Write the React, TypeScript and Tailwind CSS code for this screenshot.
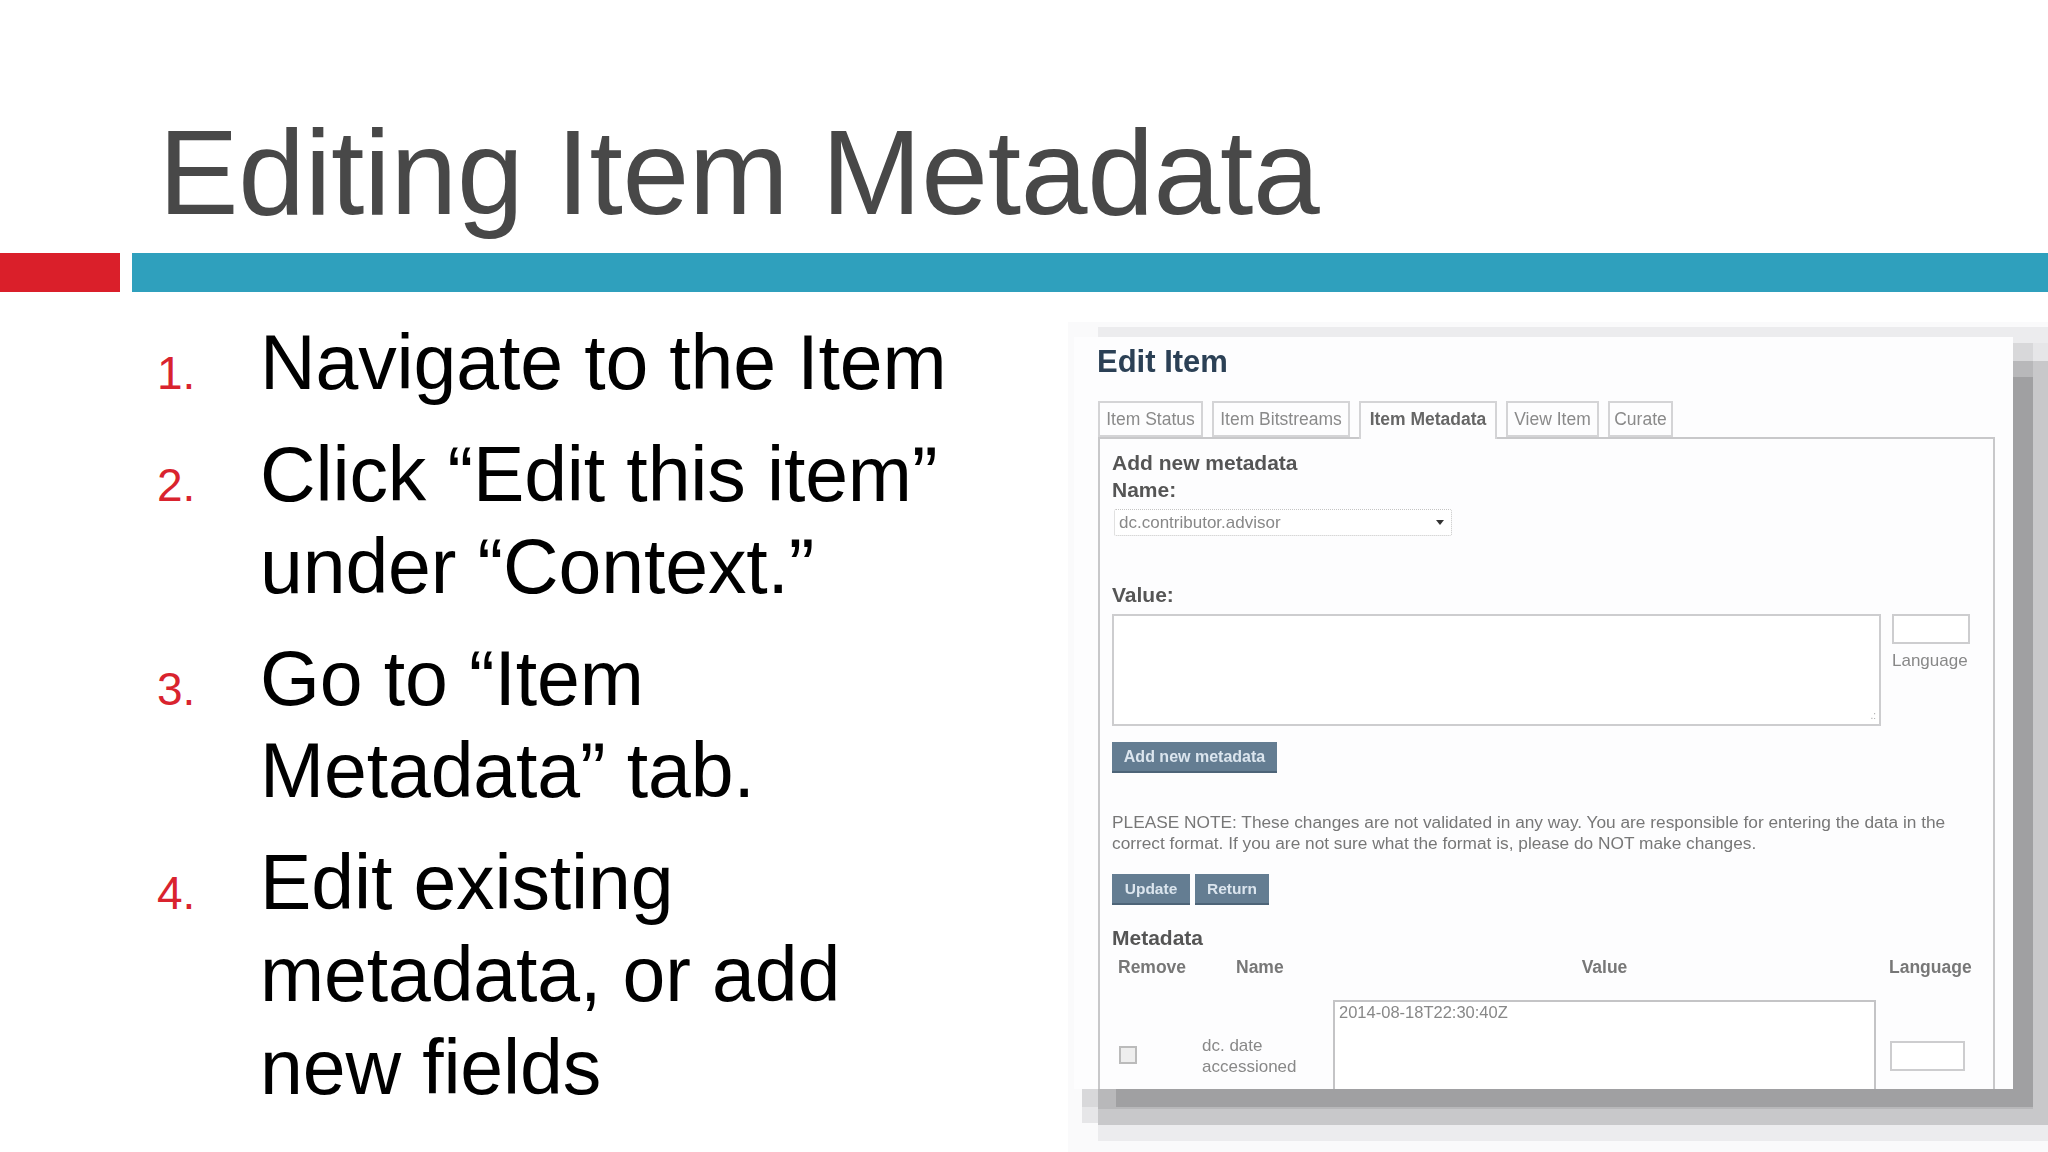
const steps: string[][] = [
  ["Navigate to the Item"],
  ["Click “Edit this item”", "under “Context.”"],
  ["Go to “Item", "Metadata” tab."],
  ["Edit existing", "metadata, or add", "new fields"],
];

const tabs = [
  { label: "Item Status", w: "w-[105px]" },
  { label: "Item Bitstreams", w: "w-[138px]" },
  { label: "Item Metadata", w: "w-[138px]", active: true },
  { label: "View Item", w: "w-[93px]" },
  { label: "Curate", w: "w-[65px]" },
];

function EditItemShot() {
  return (
    <div className="h-[752px] w-[939px] shrink-0 overflow-hidden bg-[#fdfdfe] shadow-[31px_29px_0_-11px_#a0a0a2,22px_22px_0_-2px_#b8b8ba,14px_12px_0_6px_#d8d8da,30px_30px_0_6px_#c8c8ca,22px_20px_0_14px_#e6e6e8,55px_21px_0_31px_#ececee,35px_26px_0_41px_#fafafb]">
      <div className="h-full pl-[23px] pr-[18px] pt-[7px] blur-[0.7px] font-['Liberation_Sans',sans-serif]">
        <h2 className="text-[31px] leading-[36px] font-bold text-[#2b4055]">Edit Item</h2>

        {/* Tabs */}
        <div className="ml-px mt-[21px] flex h-[36px] gap-[9px]">
          {tabs.map((t) => (
            <div
              key={t.label}
              className={`${t.w} border-x-2 border-t-2 border-[#d4d4d6] text-center text-[17.5px] leading-[32px] ${t.active ? "z-10 h-[38px] bg-[#fdfdfe] font-bold text-[#666]" : "border-b-2 text-[#8a8a8a]"}`}
            >
              {t.label}
            </div>
          ))}
        </div>

        {/* Panel */}
        <div className="ml-px h-[680px] w-[897px] border-x-2 border-t-2 border-[#c8c8ca] pl-3 pr-[18px]">
          <div className="pt-[10px] text-[21px] leading-[27px] font-bold text-[#555]">
            <div>Add new metadata</div>
            <div>Name:</div>
          </div>
          <div className="ml-[2px] mt-[6px] flex h-[27px] w-[338px] items-center justify-between rounded-[2px] border border-dotted border-[#c4c4c4] bg-white pl-[4px] pr-[7px] text-[17px] text-[#888]">
            <span>dc.contributor.advisor</span>
            <span className="h-0 w-0 border-x-[4px] border-t-[5px] border-x-transparent border-t-[#333]" />
          </div>
          <div className="mt-[45px] text-[21px] leading-[27px] font-bold text-[#555]">Value:</div>
          <div className="mt-[6px] flex gap-[11px]">
            <div className="relative h-[112px] w-[769px] border-2 border-[#cdcdcf] bg-white">
              <span className="absolute right-[3px] bottom-[3px] text-[10px] leading-[10px] text-[#aaa]">.:</span>
            </div>
            <div className="w-[78px]">
              <div className="h-[30px] border-2 border-[#cdcdcf] bg-white" />
              <div className="mt-[7px] text-[17px] leading-[20px] text-[#888]">Language</div>
            </div>
          </div>

          <div className="mt-[16px] flex h-[31px] w-[165px] items-center justify-center border-b-2 border-[#4d6478] bg-[#647d92] text-[16px] font-bold text-[#dbe5ee]">
            Add new metadata
          </div>

          <p className="mt-[39px] w-[850px] text-[17.3px] leading-[21px] text-[#777]">
            PLEASE NOTE: These changes are not validated in any way. You are responsible for entering the data in the correct format. If you are not sure what the format is, please do NOT make changes.
          </p>

          <div className="mt-[20px] flex gap-[5px]">
            <div className="flex h-[31px] w-[78px] items-center justify-center border-b-2 border-[#4d6478] bg-[#647d92] text-[15.5px] font-bold text-[#dbe5ee]">Update</div>
            <div className="flex h-[31px] w-[74px] items-center justify-center border-b-2 border-[#4d6478] bg-[#647d92] text-[15.5px] font-bold text-[#dbe5ee]">Return</div>
          </div>

          <div className="mt-[19px] text-[21px] leading-[27px] font-bold text-[#555]">Metadata</div>

          {/* Metadata table */}
          <div className="grid grid-cols-[90px_131px_543px_1fr] text-[17.5px]">
            <div className="pl-[6px] pt-[4px] leading-[24px] font-bold text-[#777]">Remove</div>
            <div className="pl-[34px] pt-[4px] leading-[24px] font-bold text-[#777]">Name</div>
            <div className="pt-[4px] text-center leading-[24px] font-bold text-[#777]">Value</div>
            <div className="pl-[13px] pt-[4px] leading-[24px] font-bold whitespace-nowrap text-[#777]">Language</div>

            <div className="pl-[7px] pt-[67px]">
              <div className="h-[18px] w-[18px] border-2 border-[#bbb] bg-[#eee]" />
            </div>
            <div className="pt-[56px] text-[17px] leading-[21px] text-[#888]">
              dc. date<br />accessioned
            </div>
            <div className="mt-[21px] h-[100px] border-x-2 border-t-2 border-[#c4c4c6] bg-white pl-[4px] text-[16.5px] leading-[20px] text-[#888]">
              2014-08-18T22:30:40Z
            </div>
            <div className="pl-[14px] pt-[62px]">
              <div className="h-[30px] w-[75px] border-2 border-[#cdcdcf] bg-white" />
            </div>
          </div>
        </div>
      </div>
    </div>
  );
}

export default function App() {
  return (
    <div className="h-[1152px] w-[2048px] overflow-hidden bg-white font-['Liberation_Sans',sans-serif]">
      <header className="h-[253px] pl-[158.5px] pt-[112px]">
        <h1 className="text-[120px] leading-[120px] tracking-[-0.3px] whitespace-nowrap text-[#484848]">Editing Item Metadata</h1>
      </header>

      <div className="flex h-[39px] gap-3">
        <div className="w-[120px] bg-[#da1f2a]" />
        <div className="flex-1 bg-[#2fa0bd]" />
      </div>

      <div className="flex">
        <ol className="w-[1074px] shrink-0 pl-[157px] pt-[24px]">
          {steps.map((lines, i) => (
            <li key={i} className="mb-[19px] flex items-baseline">
              <span className="w-[103px] shrink-0 text-[46px] text-[#d9232e]">{i + 1}.</span>
              <div className="text-[77px] leading-[92.5px] tracking-[-0.13px] whitespace-nowrap text-black">
                {lines.map((l) => (
                  <div key={l}>{l}</div>
                ))}
              </div>
            </li>
          ))}
        </ol>
        <div className="mt-[45px]">
          <EditItemShot />
        </div>
      </div>
    </div>
  );
}
